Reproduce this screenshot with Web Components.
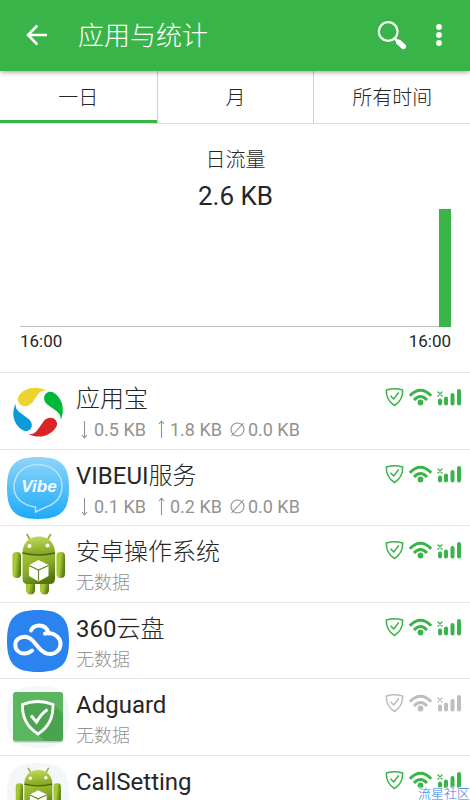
<!DOCTYPE html>
<html lang="zh-CN">
<head>
<meta charset="utf-8">
<meta name="viewport" content="width=device-width, initial-scale=1">
<title>应用与统计</title>
<style>
  html, body { margin: 0; height: 100%; }
  body {
    --green: #39b449;
    --ink: #262626;
    background: #fff; color: var(--ink);
    font-family: Roboto, "Noto Sans CJK SC", sans-serif;
    font-weight: 300;
  }
</style>
</head>
<body>
<stats-screen>
  <app-bar slot="bar">应用与统计</app-bar>
  <period-tabs slot="tabs">
    <period-tab selected>一日</period-tab>
    <period-tab>月</period-tab>
    <period-tab>所有时间</period-tab>
  </period-tabs>
  <traffic-chart slot="chart" total="2.6 KB" from="16:00" to="16:00">日流量</traffic-chart>
  <app-row name="应用宝" icon="bao" down="0.5 KB" up="1.8 KB" blocked="0.0 KB"></app-row>
  <app-row name="VIBEUI服务" icon="vibe" down="0.1 KB" up="0.2 KB" blocked="0.0 KB"></app-row>
  <app-row name="安卓操作系统" icon="android" note="无数据"></app-row>
  <app-row name="360云盘" icon="cloud" note="无数据"></app-row>
  <app-row name="Adguard" icon="adguard" note="无数据" off></app-row>
  <app-row name="CallSetting" icon="call"></app-row>
  <site-mark slot="mark">流星社区</site-mark>
</stats-screen>

<script>
const define = (name, html, ready) => customElements.define(name, class extends HTMLElement {
  constructor() {
    super();
    const t = document.createElement('template');
    t.innerHTML = html;
    this.attachShadow({ mode: 'open' }).append(t.content.cloneNode(true));
  }
  connectedCallback() { if (ready) ready(this, this.shadowRoot); }
});

define('stats-screen', `
<style>
  :host { display: flex; flex-direction: column; height: 100vh; overflow: hidden; position: relative; }
  main { flex: 1; min-height: 0; display: flex; flex-direction: column; }
  .list { flex: 1; min-height: 0; overflow-y: auto; scrollbar-width: none; border-top: 1px solid #e6e6e6; }
  ::slotted(app-row:nth-of-type(even)) { --row: 76px; }
</style>
<slot name="bar"></slot>
<main>
  <slot name="tabs"></slot>
  <slot name="chart"></slot>
  <div class="list" role="list"><slot></slot></div>
</main>
<slot name="mark"></slot>`);

define('app-bar', `
<style>
  :host { display: block; position: relative; z-index: 1; background: var(--green); color: #fff; box-shadow: 0 1px 5px rgba(0,0,0,.4); }
  header { display: flex; align-items: center; height: 71px; padding: 0 16px 0 20px; box-sizing: border-box; }
  h1 { flex: 1; margin: 0 0 0 24px; font-size: 26px; line-height: 36px; font-weight: 300; }
  button { border: 0; padding: 0; background: none; color: inherit; display: flex; }
  .find { margin-right: 16px; }
</style>
<header>
  <button aria-label="返回"><svg width="34" height="34" viewBox="0 0 34 34" fill="none" stroke="#fff" stroke-width="2.6"><path d="M27 16H8M17.300 6.500 8 16l9.300 9.500"/></svg></button>
  <h1><slot></slot></h1>
  <button class="find" aria-label="搜索"><svg width="32" height="32" viewBox="0 0 32 32" fill="none" stroke="#fff" stroke-linecap="round"><circle cx="12.200" cy="11.500" r="9.400" stroke-width="2.200"/><path d="M18.800 18.500l4 4" stroke-width="2.600"/><path d="M22.800 22.300l4.600 4.200" stroke-width="5.400"/></svg></button>
  <button aria-label="更多"><svg width="30" height="32" viewBox="0 0 30 32" fill="#fff"><circle cx="15" cy="7" r="2.900"/><circle cx="15" cy="15" r="2.900"/><circle cx="15" cy="23" r="2.900"/></svg></button>
</header>`);

define('period-tabs', `
<style>
  :host { display: grid; grid-template-columns: repeat(3, 1fr); border-bottom: 1px solid #dcdcdc; }
</style><slot></slot>`);

define('period-tab', `
<style>
  :host { display: block; border-left: 1px solid #cfcfcf; }
  :host(:first-child) { border-left: 0; }
  button { display: block; width: 100%; height: 52px; border: 0; border-bottom: 3px solid transparent; padding: 4px 0 0; background: #fff; color: var(--ink); font: inherit; font-size: 20px; line-height: 28px; }
  :host([selected]) button { border-bottom-color: var(--green); }
</style>
<button><slot></slot></button>`, (el, r) =>
  r.querySelector('button').setAttribute('aria-pressed', el.hasAttribute('selected')));

define('traffic-chart', `
<style>
  :host { display: block; padding: 22px 19px 20px 20px; text-align: center; }
  h2 { margin: 0; font-size: 20px; line-height: 28px; font-weight: 300; }
  .total { font-size: 26px; line-height: 36px; font-weight: 400; margin-top: 4px; }
  .plot { height: 117px; border-bottom: 1px solid #bdbdbd; display: flex; justify-content: flex-end; margin-top: -5px; }
  .bar { width: 12px; height: 118px; background: var(--green); }
  .axis { display: flex; justify-content: space-between; font-size: 17px; line-height: 20px; font-weight: 400; padding: 4px 0 1px; }
</style>
<h2><slot></slot></h2>
<div class="total"></div>
<div class="plot"><div class="bar"></div></div>
<div class="axis"><span class="from"></span><span class="to"></span></div>`, (el, r) => {
  for (const k of ['total', 'from', 'to']) r.querySelector('.' + k).textContent = el.getAttribute(k);
});

const robot = `
  <defs>
    <linearGradient id="g" x1="0" x2="1" y2=".3"><stop stop-color="#9fbd2c"/><stop offset=".45" stop-color="#a9cb35"/><stop offset="1" stop-color="#587d12"/></linearGradient>
    <linearGradient id="h" y2="1" x2=".2"><stop stop-color="#c5dc60"/><stop offset="1" stop-color="#84a81f"/></linearGradient>
    <linearGradient id="b" y2="1" x2=".5"><stop stop-color="#a5c437"/><stop offset=".6" stop-color="#87a927"/><stop offset="1" stop-color="#55740f"/></linearGradient>
  </defs>
  <g fill="url(#g)"><rect x="19" y="46" width="9" height="15.500" rx="4.200"/><rect x="33" y="46" width="9" height="15.500" rx="4.200"/>
  <rect x="5.500" y="19" width="8.500" height="26" rx="4"/><rect x="49.500" y="19" width="8.500" height="26" rx="4"/></g>
  <path d="M23.500 7.500 20 1.500M40 7.500 43.500 1.500" stroke="#8bad2b" stroke-width="1.600" stroke-linecap="round"/>
  <path d="M15.500 20C15.500 10 22 3.500 31.800 3.500S48 10 48 20Q32 24 15.500 20z" fill="url(#h)"/>
  <path d="M15.500 20Q32 24 48 20V46q0 5-5 5H20.500q-5 0-5-5z" fill="url(#b)"/>
  <path d="M15.500 20Q32 24 48 20" fill="none" stroke="#48650f" stroke-width="1.400"/>
  <circle cx="22.500" cy="13" r="2" fill="#fff"/><circle cx="40.500" cy="12.500" r="2" fill="#fff"/>
  <path d="M31.500 27 41.500 32V43L31.500 48.500 22 43V32z" fill="#fff"/>
  <path d="M22 32.500 31.500 37 41.500 32.500M31.500 37v11" fill="none" stroke="#668622" stroke-width="1.200"/>`;

const icons = {
  bao: `
    <path d="M11.500 16.500C16 9 25 6.500 34 8.500c2 .5 4.500 1.500 6.500 2.200-5-.7-7.500 1-10 4.300l-5.500 8c-3 3.800-9.500 4.300-12.500.8-1.500-2-2.200-5-1-7.300z" fill="#edd32d"/>
    <path d="M46.500 12.500C54 17 57 26 55.500 34c-.5 2.200-1 4-1.800 6 .3-4.500-1.500-7-5-9.500L41 25c-4.500-3-5.300-9-1.500-12 2-1.700 5-1.700 7-.5z" fill="#00b838"/>
    <path d="M49.500 46.500C44.500 55 35 58 27 56c-2-.4-4-1-5.500-1.800 4.500.3 7-1.500 9.500-5l5.500-7.700c2.700-4.300 9-5 12-1.500 1.700 2 2 4.500 1 6.500z" fill="#d92528"/>
    <path d="M15.500 50C8 45.500 5 37 6.800 29c.4-2 1-4 1.700-5.500-.3 4.500 1.500 7 5 9.500l7.500 5.500c4.300 3 5.300 8.500 1.500 11.500-2 1.500-5 1.500-7 0z" fill="#0b9bd8"/>`,
  vibe: `
    <defs><linearGradient id="v" y2="1" x2="0"><stop stop-color="#8fd5fa"/><stop offset="1" stop-color="#1caaf8"/></linearGradient></defs>
    <path d="M31 0C54 0 62 8 62 31S54 62 31 62 0 54 0 31 8 0 31 0z" fill="url(#v)"/>
    <path d="M28.500 50C15 48 7 40.500 7 30 7 17 17 7.500 31 7.500S55 17 55 29.500C55 42 45 48 38 50.500L28.500 55z" fill="none" stroke="#b5e3fd" stroke-width="1.500"/>
    <text x="32" y="35" text-anchor="middle" font-family="Liberation Sans, sans-serif" font-size="17" font-weight="700" font-style="italic" fill="#f2faff">Vibe</text>`,
  android: robot,
  cloud: `
    <path d="M31 0C54 0 62 8 62 31S54 62 31 62 0 54 0 31 8 0 31 0z" fill="#2a83ee"/>
    <path d="M24 20.500C25.500 17 28.500 15.500 32 15.500c5 0 8.500 3.200 9.800 8M38 23.600c2-.8 4-.8 5.500-.3 5.500 1 10 5 10 10.500 0 6-4.800 10.200-10.500 10.200-4.500 0-7.500-2-10.500-5.500l-6.500-7.500c-2.700-3-5.500-4.300-8.500-4.300-5.200 0-9.200 3.500-9.200 8.300 0 5 4 8.500 9 8.500 3.200 0 5.200-.8 7.700-3" fill="none" stroke="#fff" stroke-width="4" stroke-linecap="round" stroke-linejoin="round"/>`,
  adguard: `
    <path d="M31 0C54 0 62 8 62 31S54 62 31 62 0 54 0 31 8 0 31 0z" fill="#f4f6f8"/>
    <rect x="6" y="7.500" width="50" height="49" rx="3" fill="#b9c4bb"/>
    <rect x="6" y="6" width="50" height="49" rx="3" fill="#5cb660"/>
    <path d="M45.500 17.500 56 28V52q0 3-3 3H38L27 45z" fill="#4aa44f"/>
    <path d="M31 15.500c5 0 10 1 15 3C46.500 32 42 41 31 48 20 41 15 32 15.500 18.500c5-2 10.500-3 15.500-3z" fill="#4da552" stroke="#fff" stroke-width="2.800"/>
    <path d="M24 29.500 29.500 36C33 30 36 26.500 40.500 23.500" fill="none" stroke="#fff" stroke-width="3"/>`,
  call: `
    <path d="M31 0C54 0 62 8 62 31S54 62 31 62 0 54 0 31 8 0 31 0z" fill="#f4f6f8"/>
    <g transform="translate(4 4) scale(.86)">${robot}</g>`
};

define('app-row', `
<style>
  :host { display: flex; box-sizing: border-box; height: var(--row, 77px); padding: 7px 8px 0 7px; gap: 7px; border-bottom: 1px solid #e6e6e6; overflow: hidden; --state: var(--green); }
  :host([off]) { --state: #bdbdbd; }
  .icon { flex: none; width: 62px; height: 62px; }
  .text { flex: 1; min-width: 0; }
  h3 { margin: 0; padding-top: 1px; font-size: 24px; line-height: 36px; font-weight: 300; white-space: nowrap; }
  .latin { font-weight: 400; }
  p { margin: 0; font-size: 18px; line-height: 26px; color: #929292; display: flex; gap: 8px; white-space: nowrap; }
  p span { display: flex; align-items: center; font-weight: 400; }
  .state { display: flex; gap: 5px; padding-top: 7px; height: 20px; fill: none; stroke: var(--state); }
</style>
<svg class="icon" viewBox="0 0 62 62" aria-hidden="true"></svg>
<div class="text"><h3></h3><p></p></div>
<div class="state">
  <svg width="19" height="20" viewBox="0 0 19 20" stroke-width="1.500" stroke-linejoin="round"><path d="M9.500 1.700c2.800 0 5.500.5 8.200 1.300.2 7.500-2.200 11.800-8.200 15.500C3.500 14.800 1.100 10.500 1.300 3c2.700-.8 5.400-1.300 8.200-1.300z"/><path d="M5.500 8.700 8.700 12l5-6.500"/></svg>
  <svg width="23" height="20" viewBox="0 0 23 20" stroke-width="3"><path d="M.8 8.800Q11.500-2.300 22.200 8.800M5 13Q11.500 6.200 18 13"/><circle cx="11.500" cy="15.500" r="2.900" fill="var(--state)" stroke="none"/></svg>
  <svg width="25" height="20" viewBox="0 0 25 20" stroke-width="4" stroke-linecap="round"><path d="M3 13.500V16.500M9 11.500V16.500M15.500 8V16.500M22 4V16.500"/><path d="M1 5 5 9M5 5 1 9" stroke-width="1.300"/></svg>
</div>`, (el, r) => {
  el.setAttribute('role', 'listitem');
  r.querySelector('.icon').innerHTML = icons[el.getAttribute('icon')];
  r.querySelector('h3').innerHTML = el.getAttribute('name').replace(/[A-Za-z0-9]+/g, '<span class="latin">$&</span>');
  const arrow = (d, w = 18) => `<svg width="${w}" height="20" viewBox="0 0 ${w} 20" fill="none" stroke="#929292" stroke-width="1.100">${d}</svg>`;
  r.querySelector('p').innerHTML = el.hasAttribute('down')
    ? `<span>${arrow('<path d="M8.500 1V18M6 15 8.500 18 11 15"/>')}${el.getAttribute('down')}</span>` +
      `<span>${arrow('<path d="M7.500 18V1M5 4 7.500 1 10 4"/>', 16)}${el.getAttribute('up')}</span>` +
      `<span>${arrow('<circle cx="7.500" cy="9.500" r="6.500"/><path d="M1.500 16 13.500 3"/>')}${el.getAttribute('blocked')}</span>`
    : el.getAttribute('note') || '';
});

define('site-mark', `
<style>
  :host { position: absolute; right: 0; bottom: -3px; font-size: 13px; line-height: 18px; font-weight: 300; color: #2f80e8; text-shadow: 1px 0 #fff, -1px 0 #fff, 0 1px #fff, 0 -1px #fff; }
</style><slot></slot>`);
</script>
</body>
</html>
